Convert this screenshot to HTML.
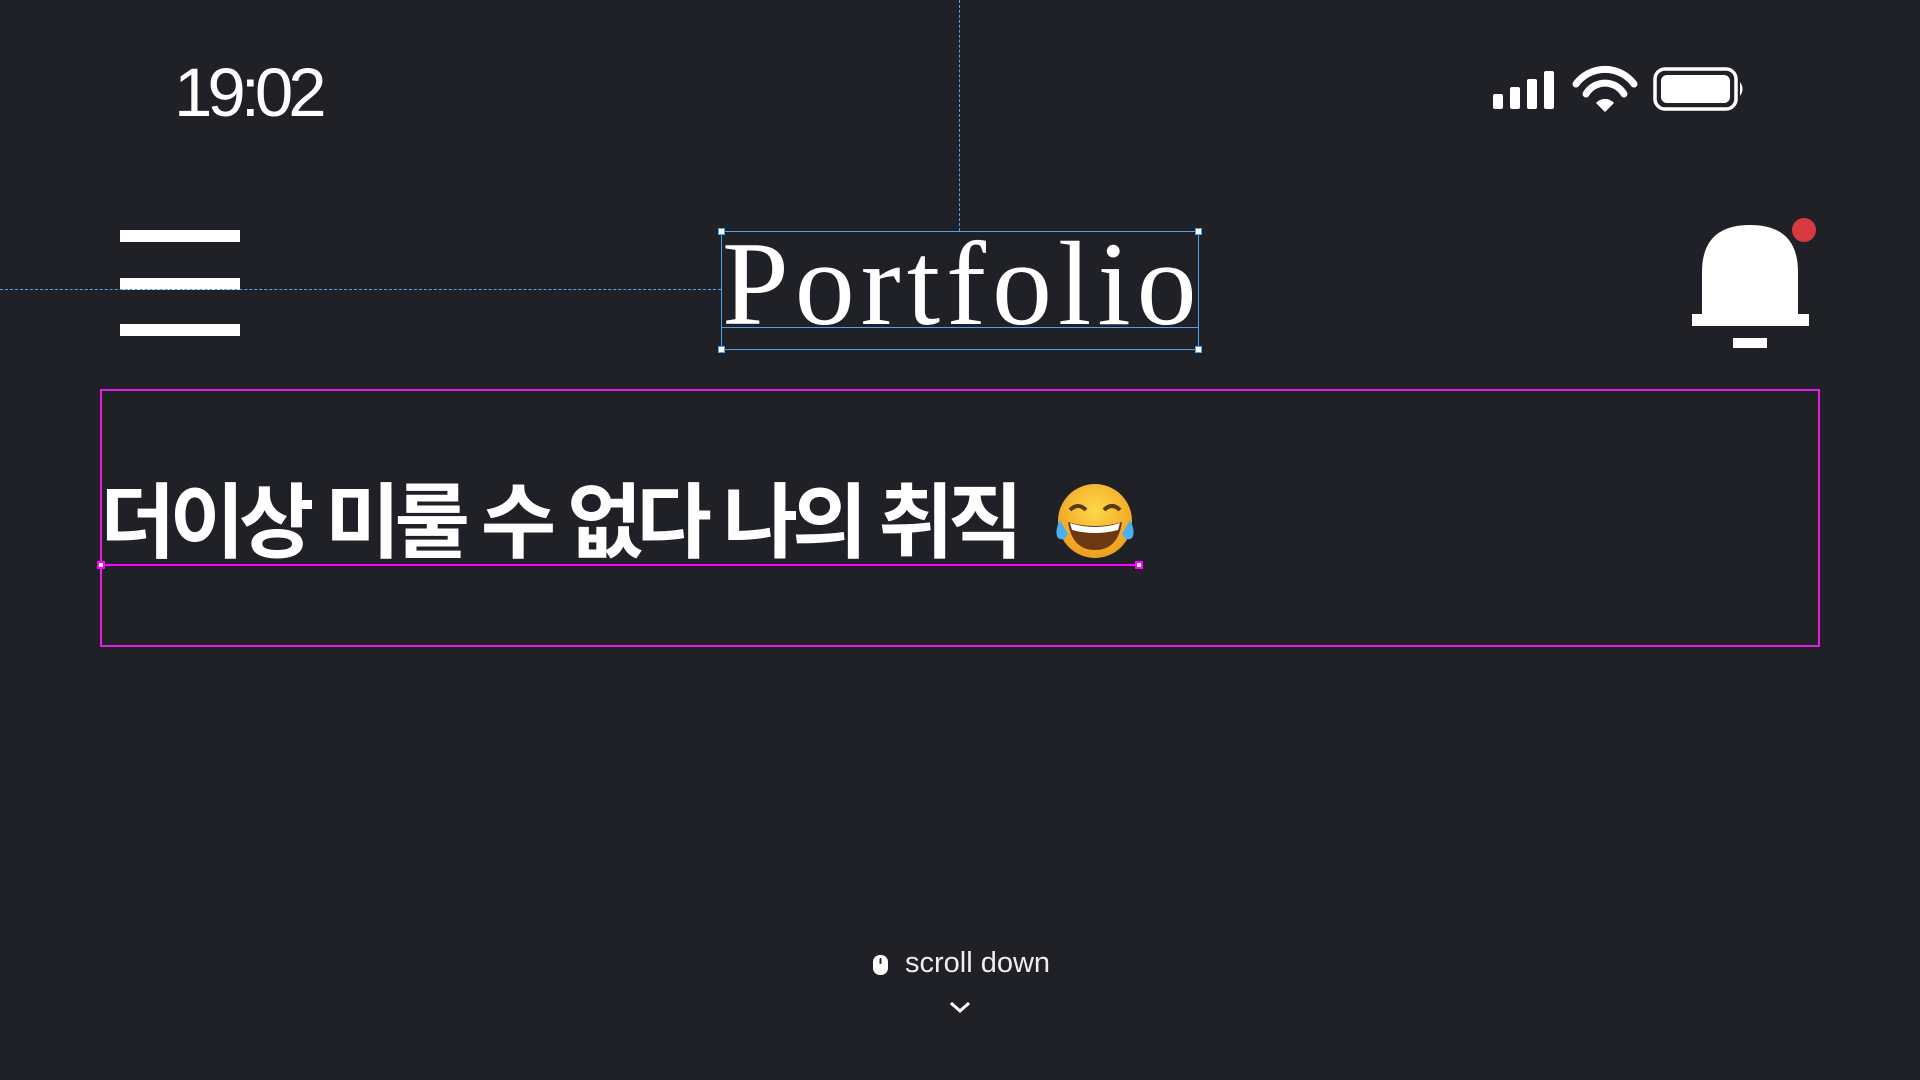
<!DOCTYPE html>
<html><head><meta charset="utf-8"><style>
html,body{margin:0;padding:0;}
body{width:1920px;height:1080px;background:#202127;position:relative;overflow:hidden;font-family:"Liberation Sans",sans-serif;color:#fff;}
.a{position:absolute;}
.bar{position:absolute;left:120px;width:120px;height:12px;background:#fff;}
.h{position:absolute;width:7px;height:7px;background:#fff;border:1.5px solid #4aa3f0;box-sizing:border-box;}
.hm{position:absolute;width:8px;height:8px;background:#fff;border:2px solid #f0f;box-sizing:border-box;}
</style></head><body>
<div class="a" style="left:174px;top:53px;font-size:69px;letter-spacing:-5px;font-weight:500;">19:02</div>

<svg class="a" style="left:1490px;top:64px" width="260" height="52" viewBox="0 0 260 52">
  <rect x="3" y="30" width="10" height="15" rx="2" fill="#fff"/>
  <rect x="20" y="23" width="10" height="22" rx="2" fill="#fff"/>
  <rect x="37" y="15" width="10" height="30" rx="2" fill="#fff"/>
  <rect x="54" y="7" width="10" height="38" rx="2" fill="#fff"/>
  <path d="M86 20 A36 36 0 0 1 144 20" stroke="#fff" stroke-width="7" fill="none" stroke-linecap="round"/>
  <path d="M96 30 A22 22 0 0 1 134 30" stroke="#fff" stroke-width="7" fill="none" stroke-linecap="round"/>
  <path d="M106 39 L115 48 L124 39 A12 12 0 0 0 106 39Z" fill="#fff"/>
  <rect x="165" y="5" width="81" height="40" rx="10" stroke="#fff" stroke-width="3.5" fill="none"/>
  <rect x="171" y="11" width="69" height="28" rx="6" fill="#fff"/>
  <path d="M250 18 Q255 25 250 32Z" fill="#fff"/>
</svg>

<div class="bar" style="top:230px"></div>
<div class="bar" style="top:278px"></div>
<div class="bar" style="top:324px"></div>

<div class="a" style="left:959px;top:0;height:231px;border-left:1.5px dashed #4aa3f0;"></div>
<div class="a" style="left:0;top:289px;width:721px;border-top:1.5px dashed #4aa3f0;"></div>
<div class="a" style="left:721px;top:231px;width:478px;height:119px;border:1.5px solid #4aa3f0;box-sizing:border-box;"></div>
<div class="a" style="left:721px;top:327px;width:478px;border-top:1.5px solid #4aa3f0;"></div>
<div class="h" style="left:718px;top:228px"></div><div class="h" style="left:1195px;top:228px"></div>
<div class="h" style="left:718px;top:346px"></div><div class="h" style="left:1195px;top:346px"></div>
<div class="a" style="left:722px;top:224px;font-family:'Liberation Serif',serif;font-size:120px;letter-spacing:6px;line-height:1;">Portfolio</div>

<svg class="a" style="left:1688px;top:214px" width="130" height="140" viewBox="0 0 130 140">
  <path d="M14 100 L14 58 Q14 11 62 11 Q110 11 110 58 L110 100 L121 100 L121 112 L4 112 L4 100Z" fill="#fff"/>
  <rect x="45" y="124" width="34" height="10" fill="#fff"/>
  <circle cx="116" cy="16" r="12" fill="#d63a3f"/>
</svg>

<div class="a" style="left:100px;top:389px;width:1720px;height:258px;border:2px solid #e31be3;box-sizing:border-box;"></div>
<div class="a" style="left:100px;top:564px;width:1039px;border-top:2px solid #f0f;"></div>
<div class="hm" style="left:97px;top:561px"></div><div class="hm" style="left:1135px;top:561px"></div>
<div class="a" style="left:100px;top:475px;font-family:'Liberation Sans','Noto Sans CJK KR',sans-serif;font-weight:700;font-size:82px;letter-spacing:-6px;line-height:1.2;white-space:nowrap;">더이상 미룰 수 없다 나의 취직</div>
<svg class="a" style="left:1052px;top:482px" width="86" height="78" viewBox="0 0 86 78">
  <defs><radialGradient id="g" cx="50%" cy="35%" r="60%"><stop offset="0" stop-color="#ffd84a"/><stop offset="1" stop-color="#f0a020"/></radialGradient></defs>
  <ellipse cx="43" cy="39" rx="37" ry="37" fill="url(#g)"/>
  <path d="M18 28 Q26 20 34 28" stroke="#5a3a10" stroke-width="4" fill="none"/>
  <path d="M52 28 Q60 20 68 28" stroke="#5a3a10" stroke-width="4" fill="none"/>
  <path d="M16 40 Q43 48 70 40 Q66 68 43 68 Q20 68 16 40Z" fill="#6b3a12"/>
  <path d="M18 41 Q43 49 68 41 L66 48 Q43 54 20 48Z" fill="#fff"/>
  <path d="M8 38 Q2 50 6 56 Q12 60 16 52Z" fill="#4ab0f0"/>
  <path d="M78 38 Q84 50 80 56 Q74 60 70 52Z" fill="#4ab0f0"/>
</svg>

<svg class="a" style="left:872px;top:954px" width="18" height="22" viewBox="0 0 18 22">
  <rect x="1" y="1" width="15" height="20" rx="7" fill="#fff"/>
  <rect x="7.5" y="4" width="2" height="6" rx="1" fill="#202127"/>
</svg>
<div class="a" style="left:905px;top:947px;font-size:29px;color:#eee;">scroll down</div>
<svg class="a" style="left:948px;top:999px" width="24" height="16" viewBox="0 0 24 16">
  <path d="M3 4 L12 12 L21 4" stroke="#fff" stroke-width="3" fill="none"/>
</svg>
</body></html>
